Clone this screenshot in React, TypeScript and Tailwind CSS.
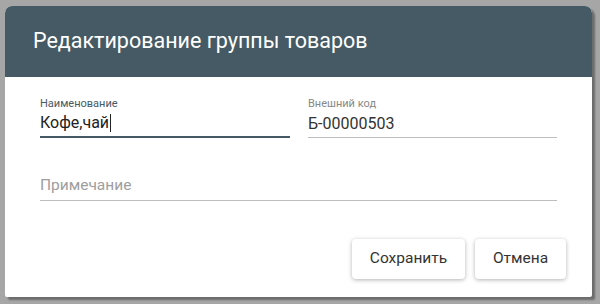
import React from "react";

export default function App() {
  return (
    <div className="w-[600px] h-[304px] bg-[#a6a6a6] pt-[6px] pl-[5px] overflow-hidden" style={{ fontFamily: "Roboto, 'Liberation Sans', sans-serif" }}>
      <div className="w-[587px] h-[291px] bg-white rounded-t-[7px] rounded-b-[2px] overflow-hidden flex flex-col shadow-[3px_3px_2px_rgba(0,0,0,0.35)]">
        <div className="h-[71px] bg-[#455a64] flex items-center pl-[28px] pb-[2px]">
          <span className="text-white text-[21.5px] leading-none">Редактирование группы товаров</span>
        </div>
        <div className="flex flex-col px-[35px] pt-[20px]">
          <div className="flex gap-[18px]">
            <div className="w-[250px] flex flex-col">
              <span className="text-[11px] leading-[13px] text-[#455a64]">Наименование</span>
              <div className="h-[28px] flex items-center text-[16px] text-[#222] border-b-2 border-[#455a64]">
                <span>Кофе,чай</span>
                <span className="w-px h-[18px] bg-[#222] ml-px"></span>
              </div>
            </div>
            <div className="w-[249px] flex flex-col">
              <span className="text-[11px] leading-[13px] text-[#888]">Внешний код</span>
              <div className="h-[28px] flex items-center text-[16px] text-[#333] border-b border-[#bdbdbd]">
                <span>Б-00000503</span>
              </div>
            </div>
          </div>
          <div className="mt-[33px] w-[517px] h-[30px] flex items-center border-b border-[#bdbdbd] text-[15.5px] text-[#9e9e9e]">
            Примечание
          </div>
          <div className="flex justify-end gap-[10px] mt-[38px] mr-[-9px]">
            <button className="h-[40px] w-[113px] rounded-[4px] bg-white text-[15.5px] text-[#333] shadow-[0_1px_4px_rgba(0,0,0,0.3)]">Сохранить</button>
            <button className="h-[40px] w-[91px] rounded-[4px] bg-white text-[15.5px] text-[#333] shadow-[0_1px_4px_rgba(0,0,0,0.3)]">Отмена</button>
          </div>
        </div>
      </div>
    </div>
  );
}
